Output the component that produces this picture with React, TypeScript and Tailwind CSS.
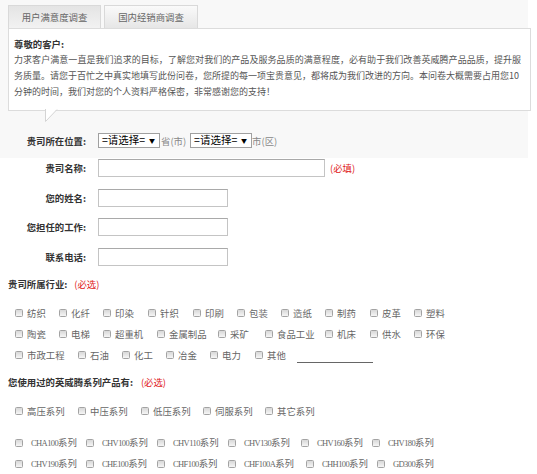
import React from "react";

const Cb = () => (
  <span className="inline-block w-[8px] h-[8px] shrink-0 border border-[#a3a3a3] rounded-[1.5px] bg-linear-to-b from-[#d8d8d8] to-[#f6f6f6]" />
);

type It = [string, string, boolean?];

const Item = ({ label, w, latin }: { label: string; w: string; latin?: boolean }) => {
  if (latin) {
    const m = label.match(/^([A-Z0-9]+)(.*)$/);
    const a = m ? m[1] : "";
    const b = m ? m[2] : label;
    return (
      <div className={`flex items-center shrink-0 ${w}`}>
        <Cb />
        <span className="ml-[8px] whitespace-nowrap text-[#666]">
          <span className="font-['Liberation_Serif',serif] text-[8.5px] tracking-[-0.6px]">{a}</span>
          {b}
        </span>
      </div>
    );
  }
  return (
    <div className={`flex items-center shrink-0 ${w}`}>
      <Cb />
      <span className="ml-[4px] whitespace-nowrap text-[#666]">{label}</span>
    </div>
  );
};

const Row = ({ items, latin, children }: { items: It[]; latin?: boolean; children?: React.ReactNode }) => (
  <div className="flex items-center h-[21px] pl-[15px]">
    {items.map(([l, w]) => (
      <Item key={l} label={l} w={w} latin={latin} />
    ))}
    {children}
  </div>
);

const ind1: It[] = [
  ["纺织", "w-[44px]"], ["化纤", "w-[44px]"], ["印染", "w-[45px]"], ["针织", "w-[45px]"], ["印刷", "w-[44px]"],
  ["包装", "w-[44px]"], ["造纸", "w-[44px]"], ["制药", "w-[45px]"], ["皮革", "w-[44px]"], ["塑料", ""],
];
const ind2: It[] = [
  ["陶瓷", "w-[44px]"], ["电梯", "w-[44px]"], ["超重机", "w-[54px]"], ["金属制品", "w-[61px]"], ["采矿", "w-[47px]"],
  ["食品工业", "w-[60px]"], ["机床", "w-[45px]"], ["供水", "w-[44px]"], ["环保", ""],
];
const ind3: It[] = [
  ["市政工程", "w-[63px]"], ["石油", "w-[44px]"], ["化工", "w-[44px]"], ["冶金", "w-[44px]"], ["电力", "w-[45px]"], ["其他", ""],
];
const pr1: It[] = [
  ["高压系列", "w-[63px]"], ["中压系列", "w-[63px]"], ["低压系列", "w-[62px]"], ["伺服系列", "w-[62px]"], ["其它系列", ""],
];
const pr2: It[] = [
  ["CHA100系列", "w-[71px]"], ["CHV100系列", "w-[71px]"], ["CHV110系列", "w-[71px]"], ["CHV130系列", "w-[73px]"],
  ["CHV160系列", "w-[71px]"], ["CHV180系列", ""],
];
const pr3: It[] = [
  ["CHV190系列", "w-[71px]"], ["CHE100系列", "w-[71px]"], ["CHF100系列", "w-[71px]"], ["CHF100A系列", "w-[78px]"],
  ["CHH100系列", "w-[71px]"], ["GD300系列", ""],
];

const Label = ({ children }: { children: React.ReactNode }) => (
  <div className="w-[86px] shrink-0 text-right font-bold text-[#333] whitespace-nowrap">{children}</div>
);

const Input = ({ w }: { w: string }) => (
  <div className={`h-[18px] bg-white border border-[#c4c4c4] border-t-[#a9a9a9] ${w}`} />
);

const Select = () => (
  <div className="w-[62px] h-[15px] bg-white border border-[#a0a0a0] flex items-center justify-between pl-[3px] pr-[4px] text-[10.5px] text-black leading-none">
    <span className="whitespace-nowrap">=请选择=</span>
    <span className="text-[6px]">▼</span>
  </div>
);

export default function App() {
  return (
    <div className="w-[537px] h-[474px] overflow-hidden bg-white font-['Noto_Sans_CJK_SC','Noto_Sans',sans-serif] text-[9.4px] leading-[16px] text-[#555]">
      <div className="w-[528px] h-[158px] bg-[#f8f8f8] pt-[5px] pl-[8px]">
        <div className="flex h-[23px]">
          <div className="w-[93px] flex items-center justify-center border border-b-0 border-[#d9d9d9] bg-linear-to-b from-[#e4e4e4] to-[#f2f2f2] text-[#666]">
            用户满意度调查
          </div>
          <div className="ml-[3px] w-[94px] flex items-center justify-center border border-b-0 border-[#d9d9d9] bg-linear-to-b from-[#fafafa] to-[#e6e6e6] text-[#666]">
            国内经销商调查
          </div>
        </div>
        <div className="relative w-[523px] h-[83px] border border-[#dcdcdc] bg-white pt-[7px] px-[5px] whitespace-nowrap text-[9px]">
          <div className="font-bold text-[#333] text-[9.4px]">尊敬的客户:</div>
          <div className="w-[507px] [text-align-last:justify]">力求客户满意一直是我们追求的目标，了解您对我们的产品及服务品质的满意程度，必有助于我们改善英威腾产品品质，提升服</div>
          <div className="w-[502px] [text-align-last:justify]">务质量。请您于百忙之中真实地填写此份问卷，您所提的每一项宝贵意见，都将成为我们改进的方向。本问卷大概需要占用您10</div>
          <div className="w-[260px] [text-align-last:justify]">分钟的时间，我们对您的个人资料严格保密，非常感谢您的支持！</div>
          <svg className="absolute left-[36px] top-full -mt-[1px]" width="14" height="14" viewBox="0 0 14 14">
            <polygon points="0,0 0.5,13 12,0" fill="#ffffff" />
            <polyline points="0.5,0 0.5,12.5 12,0.5" fill="none" stroke="#d4d4d4" strokeWidth="1" />
          </svg>
        </div>
        <div className="flex items-center mt-[22px] h-[15px] -ml-[8px]">
          <Label>贵司所在位置:</Label>
          <div className="ml-[12px] flex items-center">
            <Select />
            <span className="ml-[1px] text-[#888] whitespace-nowrap">省(市)</span>
            <div className="ml-[4px]">
              <Select />
            </div>
            <span className="text-[#888] whitespace-nowrap">市(区)</span>
          </div>
        </div>
      </div>
      <div className="flex items-center mt-[1px] h-[18px]">
        <Label>贵司名称:</Label>
        <div className="ml-[12px] flex items-center">
          <Input w="w-[227px]" />
          <span className="ml-[5px] text-[#e02020] whitespace-nowrap">(必填)</span>
        </div>
      </div>
      <div className="flex items-center mt-[12px] h-[18px]">
        <Label>您的姓名:</Label>
        <div className="ml-[12px]"><Input w="w-[130px]" /></div>
      </div>
      <div className="flex items-center mt-[11px] h-[18px]">
        <Label>您担任的工作:</Label>
        <div className="ml-[12px]"><Input w="w-[130px]" /></div>
      </div>
      <div className="flex items-center mt-[12px] h-[18px]">
        <Label>联系电话:</Label>
        <div className="ml-[12px]"><Input w="w-[130px]" /></div>
      </div>
      <div className="mt-[10px] pl-[8px] flex items-center h-[16px]">
        <span className="font-bold text-[#333]">贵司所属行业:</span>
        <span className="ml-[7px] text-[#e02020]">(必选)</span>
      </div>
      <div className="mt-[10px]">
        <Row items={ind1} />
        <Row items={ind2} />
        <Row items={ind3}>
          <span className="ml-[11px] w-[76px] h-[17px] border-b border-[#666]" />
        </Row>
      </div>
      <div className="mt-[9px] pl-[8px] flex items-center h-[16px]">
        <span className="font-bold text-[#333]">您使用过的英威腾系列产品有:</span>
        <span className="ml-[8px] text-[#e02020]">(必选)</span>
      </div>
      <div className="mt-[10px]">
        <Row items={pr1} />
      </div>
      <div className="mt-[11px]">
        <Row items={pr2} latin />
        <Row items={pr3} latin />
      </div>
    </div>
  );
}
